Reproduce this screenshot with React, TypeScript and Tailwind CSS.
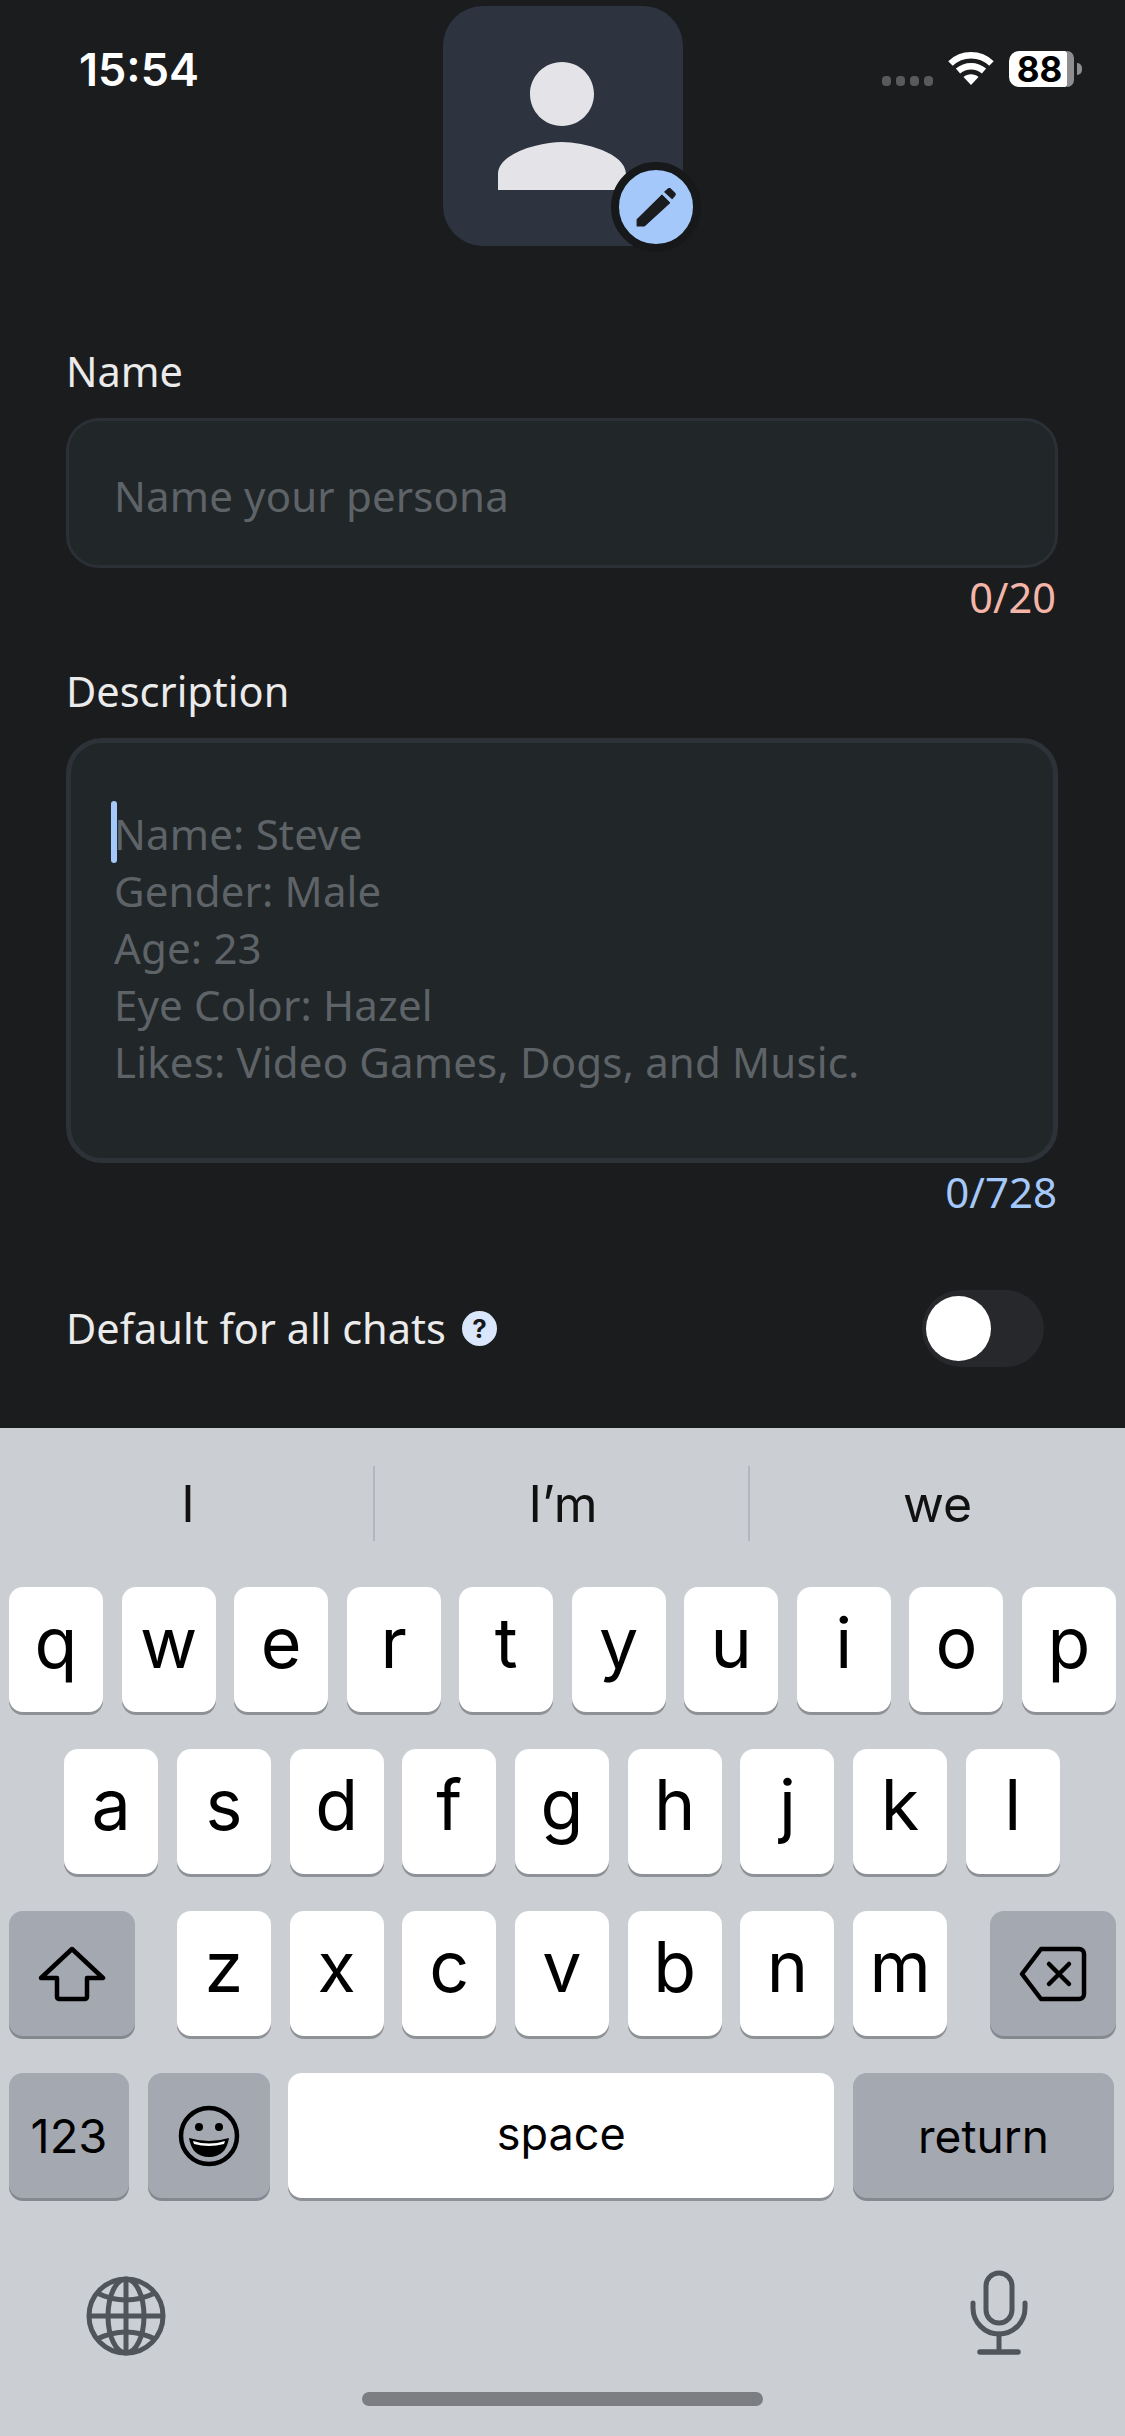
const NOTO = "font-['Noto_Sans','Open_Sans',sans-serif]";
const KEYFONT = "font-['Inter','Liberation_Sans',sans-serif]";

function Key({ label, w = "w-[94px]", dark = false, children }: { label?: string; w?: string; dark?: boolean; children?: React.ReactNode }) {
  return (
    <div className={`${w} h-[125px] rounded-[14px] flex items-center justify-center text-black ${dark ? "bg-[#a3a8b1] shadow-[0_3px_0_#85888f]" : "bg-white shadow-[0_3px_0_#8e9196]"}`}>
      {label && <span className="text-[70px] leading-none -mt-[14px]">{label}</span>}
      {children}
    </div>
  );
}

function Row({ keys }: { keys: string }) {
  return (
    <>
      {keys.split("").map((k) => (
        <Key key={k} label={k} />
      ))}
    </>
  );
}

function StatusBar() {
  return (
    <div className="absolute left-0 top-0 w-full h-[100px]">
      <span className={`absolute left-[79px] top-[45px] text-[45px] leading-[50px] font-semibold text-white ${KEYFONT}`}>15:54</span>
      <div className="absolute left-[882px] top-[76px] flex gap-[5px]">
        <i className="block w-[9px] h-[10px] rounded-[4px] bg-[#5a5a5c]" />
        <i className="block w-[9px] h-[10px] rounded-[4px] bg-[#5a5a5c]" />
        <i className="block w-[9px] h-[10px] rounded-[4px] bg-[#5a5a5c]" />
        <i className="block w-[9px] h-[10px] rounded-[4px] bg-[#5a5a5c]" />
      </div>
      <svg className="absolute left-[948px] top-[52px]" width="46" height="33" viewBox="0 0 46 33" fill="none" stroke="#fff" strokeWidth="6.5">
        <path d="M2.500 11.500C14 0.500 32 0.500 43.500 11.500" />
        <path d="M10 19C17.500 12.500 28.500 12.500 36 19" />
        <path d="M15.500 25c4-3.800 11-3.800 15 0L23 33z" fill="#fff" stroke="none" />
      </svg>
      <div className="absolute left-[1009px] top-[51px] w-[65px] h-[36px] flex">
        <div className={`w-[58px] h-full rounded-l-[10px] rounded-r-[2px] bg-white flex items-center justify-center pl-[3px] text-black text-[35px] font-bold leading-[36px] ${KEYFONT}`}>88</div>
        <div className="w-[7px] h-full rounded-r-[8px] bg-[#8e8e90]" />
      </div>
      <div className="absolute left-[1077px] top-[63px] w-[5px] h-[12px] rounded-r-full bg-[#8e8e90]" />
    </div>
  );
}

export default function App() {
  return (
    <div className={`relative w-[1125px] h-[2436px] overflow-hidden bg-[#1a1c1e] flex flex-col ${NOTO}`}>
      <StatusBar />

      <div className="pt-[6px] flex justify-center">
        <div className="relative w-[240px] h-[240px] rounded-[40px] bg-[#2d3440] flex items-center justify-center">
          <svg className="-translate-x-[1px]" width="128" height="128" viewBox="4 4 16 16" fill="#e4e4e8">
            <path d="M12 12c2.210 0 4-1.790 4-4s-1.790-4-4-4-4 1.790-4 4 1.790 4 4 4zm0 2c-2.670 0-8 1.340-8 4v2h16v-2c0-2.660-5.330-4-8-4z" />
          </svg>
          <div className="absolute left-[168px] top-[156px] w-[90px] h-[90px] rounded-full bg-[#a5c8fb] border-[8px] border-[#16181a] flex items-center justify-center">
            <svg width="42" height="42" viewBox="137 140 120 120" fill="#1a1c1e" stroke="#1a1c1e" strokeWidth="3" strokeLinejoin="round">
              <path d="M143 254 V236 L214 166 L236 188 L164 254 Z" />
              <path d="M222 157 L232 148 Q235 146 238 148 L251 161 Q253 164 251 167 L243 176 Z" />
            </svg>
          </div>
        </div>
      </div>

      <div className="ml-[66px] w-[992px] flex flex-col">
        <label className="mt-[97px] text-[41.500px] leading-[56px] text-[#ebebeb]">Name</label>
        <div className="mt-[19px] h-[150px] rounded-[33px] bg-[#212629] border-[3px] border-[#2a3036] pl-[45px] pt-[4px] flex items-center text-[42px] tracking-[0.150px] text-[#5e6367]">
          Name your persona
        </div>
        <div className="mt-[1px] pr-[2px] text-right text-[41.500px] leading-[56px] text-[#f4b5a9]">0/20</div>

        <label className="mt-[38px] text-[41.500px] leading-[56px] text-[#ebebeb]">Description</label>
        <div className="relative mt-[19px] h-[425px] rounded-[36px] bg-[#212629] border-[5px] border-[#2c3238] pl-[43px] pt-[62px] text-[42px] leading-[57px] tracking-[0.170px] text-[#5e6367]">
          <div>Name: Steve</div>
          <div>Gender: Male</div>
          <div>Age: 23</div>
          <div>Eye Color: Hazel</div>
          <div>Likes: Video Games, Dogs, and Music.</div>
          <div className="absolute left-[40px] top-[58px] w-[6px] h-[62px] rounded-full bg-[#a5c8fb]" />
        </div>
        <div className="mt-[1px] pr-[1px] text-right text-[42px] leading-[56px] text-[#a5c8fb]">0/728</div>

        <div className="mt-[70px] flex items-center justify-between pr-[14px] h-[77px]">
          <div className="flex items-center gap-[16px]">
            <span className="text-[41.500px] leading-none text-[#ebebeb]">Default for all chats</span>
            <span className={`w-[35px] h-[35px] rounded-full bg-[#d9e6fb] flex items-center justify-center text-[26px] font-bold text-[#16181a] ${KEYFONT}`}>?</span>
          </div>
          <div className="w-[122px] h-[77px] rounded-full bg-[#26282b] relative">
            <div className="absolute left-[4px] top-[6px] w-[65px] h-[65px] rounded-full bg-white" />
          </div>
        </div>
      </div>

      <div className={`mt-[61px] flex-1 bg-[#cbcfd3] flex flex-col ${KEYFONT}`}>
        <div className="h-[159px] pt-[38px] flex items-start text-[50px] text-[#111]">
          <div className="w-[375px] h-[75px] pl-[3px] pt-[2px] flex items-center justify-center border-r-2 border-[#b3b7bd]">I</div>
          <div className="w-[375px] h-[75px] pl-[3px] pt-[2px] flex items-center justify-center border-r-2 border-[#b3b7bd]">I’m</div>
          <div className="flex-1 h-[75px] pt-[2px] flex items-center justify-center">we</div>
        </div>

        <div className="flex flex-col gap-[37px]">
          <div className="px-[9px] flex justify-between">
            <Row keys="qwertyuiop" />
          </div>
          <div className="pr-[1px] flex justify-center gap-[18.700px]">
            <Row keys="asdfghjkl" />
          </div>
          <div className="px-[9px] flex justify-between">
            <Key dark w="w-[126px]">
              <svg width="68" height="56" viewBox="0 0 68 56" fill="none" stroke="#000" strokeWidth="4.500" strokeLinejoin="round">
                <path d="M34 3 L65 32 H49 V51 a2 2 0 0 1-2 2 H21 a2 2 0 0 1-2-2 V32 H3 Z" />
              </svg>
            </Key>
            <div className="mr-[1px] flex gap-[18.700px]">
              <Row keys="zxcvbnm" />
            </div>
            <Key dark w="w-[126px]">
              <svg width="68" height="56" viewBox="0 0 68 56" fill="none" stroke="#000" strokeWidth="4.500" strokeLinejoin="round" strokeLinecap="round">
                <path d="M22 3 H60 a5 5 0 0 1 5 5 V48 a5 5 0 0 1-5 5 H22 L3 28 Z" />
                <path d="M30 18 L50 38 M50 18 L30 38" />
              </svg>
            </Key>
          </div>
          <div className="px-[9px] pr-[11px] flex justify-between">
            <Key dark w="w-[120px]"><span className="text-[47px] leading-none">123</span></Key>
            <Key dark w="w-[122px]">
              <svg width="62" height="62" viewBox="0 0 62 62" fill="none" stroke="#000" strokeWidth="4.500">
                <circle cx="31" cy="31" r="28" />
                <circle cx="21" cy="22" r="4" fill="#000" stroke="none" />
                <circle cx="41" cy="22" r="4" fill="#000" stroke="none" />
                <path d="M11 33 Q31 39 51 33 Q48 52 31 52 Q14 52 11 33 Z" fill="#000" stroke="none" />
                <path d="M15 36 Q31 41 47 36 L46 39 Q31 43 16 39 Z" fill="#fff" stroke="none" />
              </svg>
            </Key>
            <Key w="w-[546px]"><span className="text-[45px] leading-none -mt-[4px]">space</span></Key>
            <Key dark w="w-[261px]"><span className="text-[46px] leading-none">return</span></Key>
          </div>
        </div>

        <div className="mt-[78px] pl-[86px] pr-[97px] flex justify-between items-start">
          <svg width="80" height="80" viewBox="0 0 80 80" fill="none" stroke="#50555b" strokeWidth="5">
            <circle cx="40" cy="40" r="37" />
            <ellipse cx="40" cy="40" rx="18" ry="37" />
            <path d="M40 3 V77 M3 40 H77" />
            <path d="M11 17 Q40 31 69 17 M11 63 Q40 49 69 63" />
          </svg>
          <svg className="-mt-[6px]" width="58" height="85" viewBox="0 0 58 85" fill="none" stroke="#50555b" strokeWidth="5" strokeLinecap="round">
            <rect x="16" y="3" width="26" height="50" rx="13" />
            <path d="M3 33 V38 a26 26 0 0 0 52 0 V33" />
            <path d="M29 64 V81" />
            <path d="M10 82 H48" strokeWidth="5.500" />
          </svg>
        </div>

        <div className="mt-[36px] mx-auto w-[401px] h-[14px] rounded-full bg-[#7c7e82]" />
      </div>
    </div>
  );
}
